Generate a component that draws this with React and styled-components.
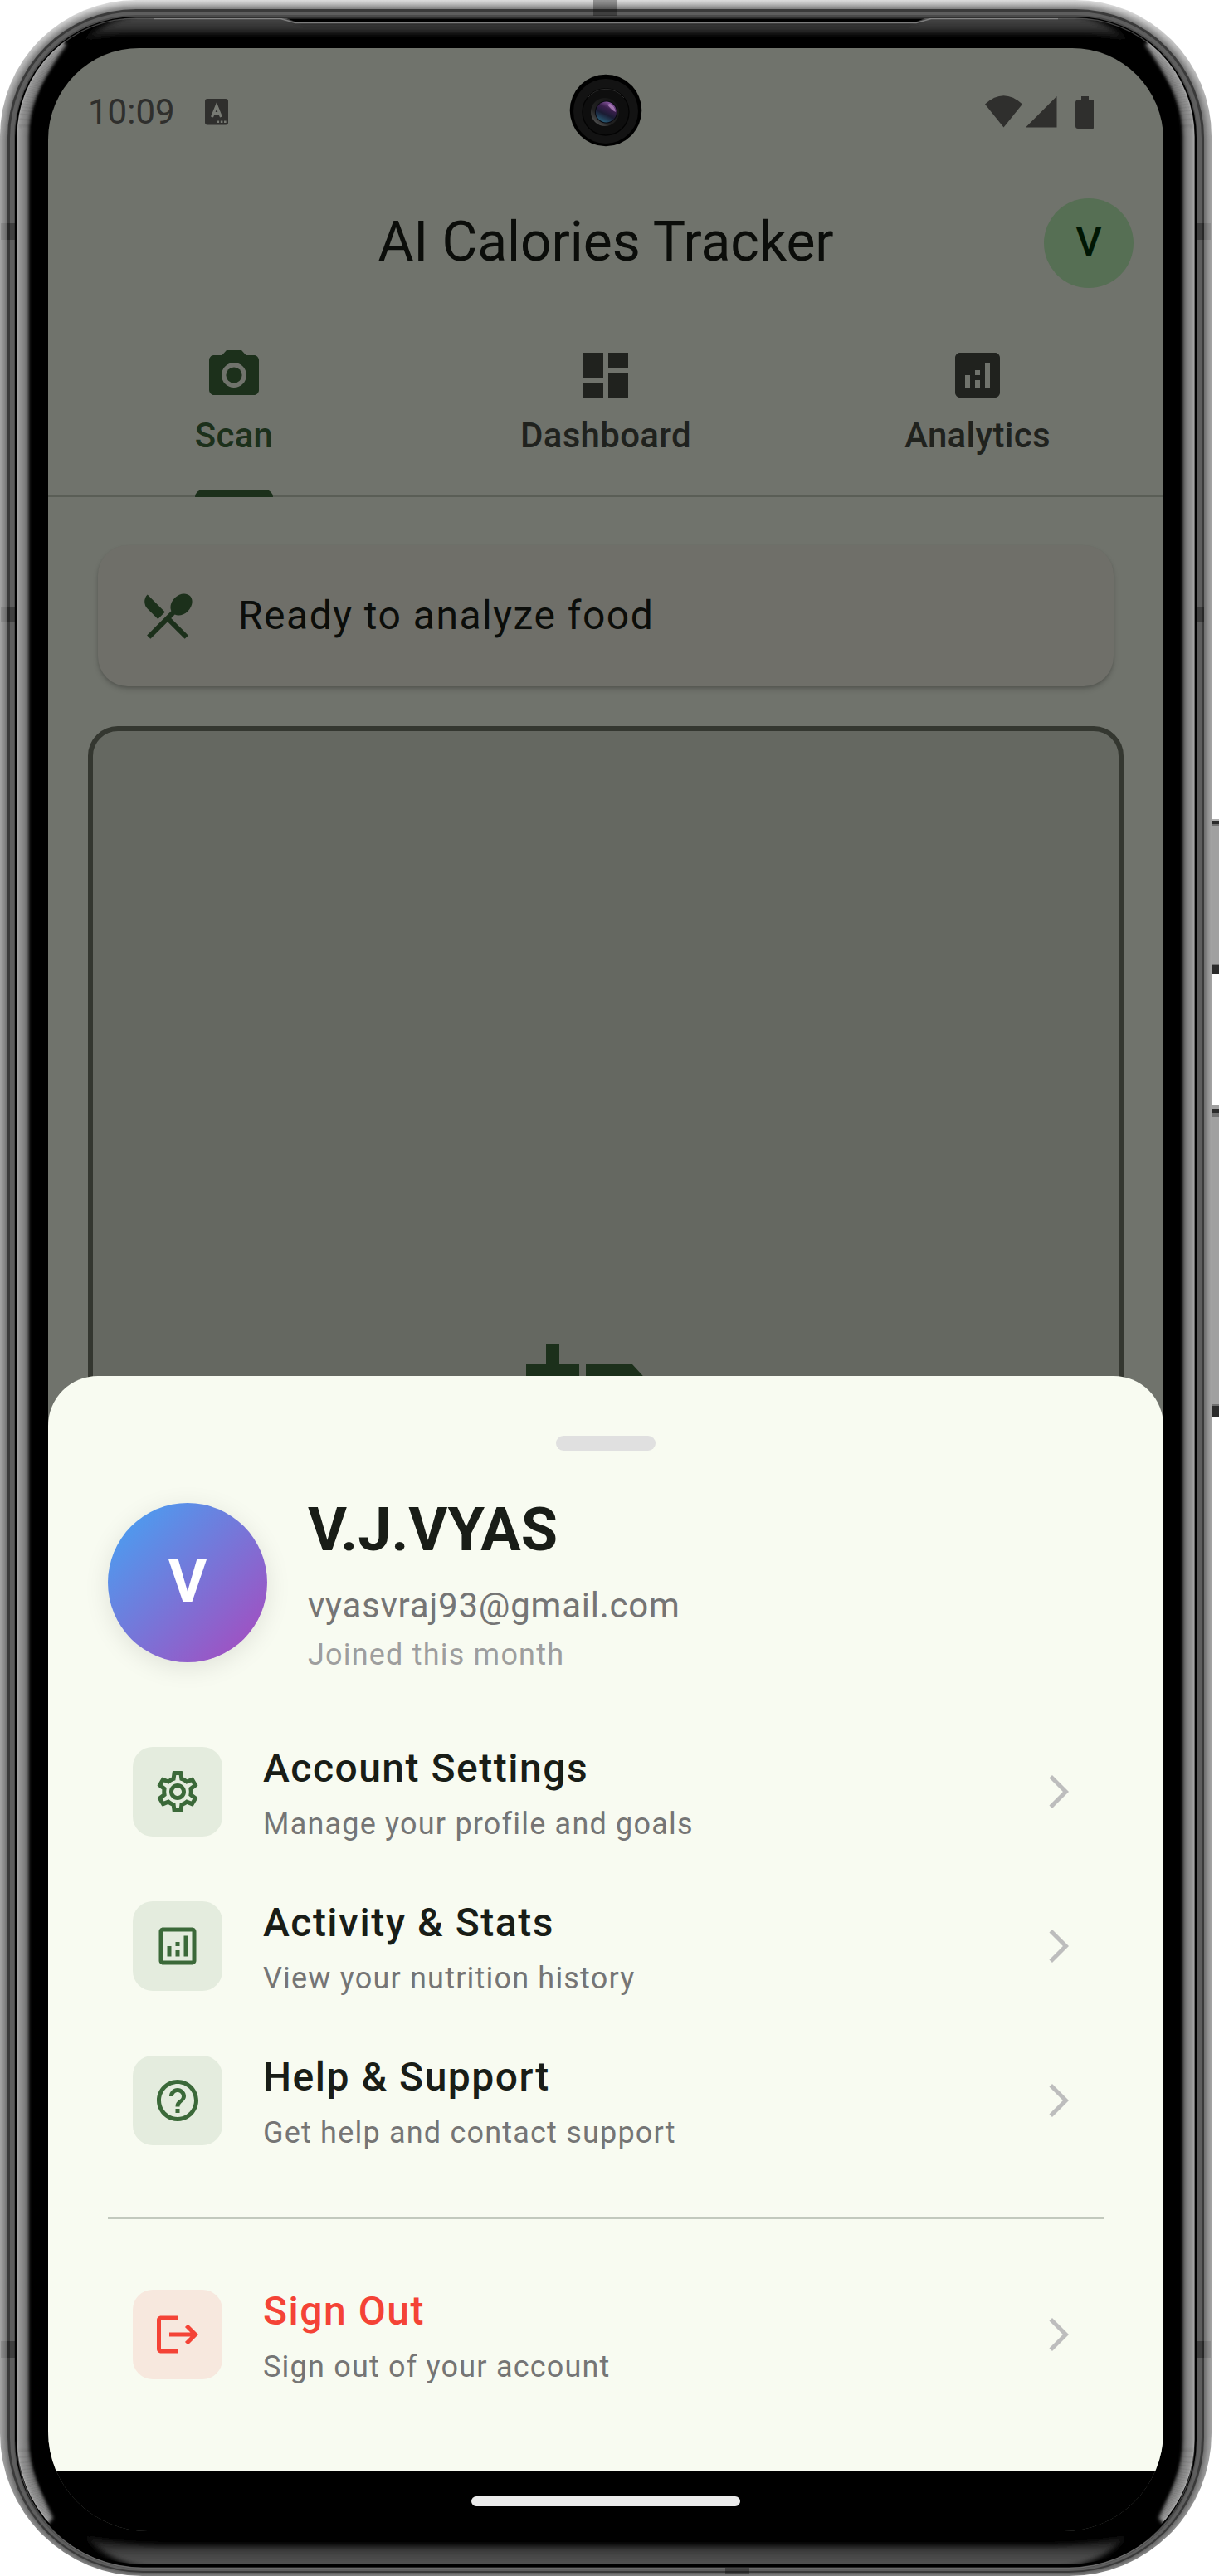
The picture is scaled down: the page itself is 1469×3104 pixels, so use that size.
import React from "react";
import styled, { createGlobalStyle } from "styled-components";
import {
  MdPhotoCamera,
  MdDashboard,
  MdAnalytics,
  MdRestaurantMenu,
  MdAddAPhoto,
  MdOutlineSettings,
  MdOutlineAnalytics,
  MdHelpOutline,
  MdLogout,
  MdArrowForwardIos,
} from "react-icons/md";

const color = {
  page: "#70736c",
  card: "#6f6f69",
  viewfinder: "#656861",
  outline: "#343730",
  hairline: "#5a5e56",
  ink: "#0b0d0a",
  muted: "#20221e",
  green: "#1c301b",
  sheet: "#f8fbf1",
  title: "#191d17",
  primary: "#3b6939",
  danger: "#f44336",
};

const GlobalStyle = createGlobalStyle`
  * { box-sizing: border-box; }
  body { margin: 0; background: #fff; font-family: Roboto, sans-serif; }
`;

const Phone = styled.main`
  position: relative;
  width: 1469px;
  height: 3104px;
  padding: 58px 67px 54px 58px;
  overflow: hidden;
`;

const ShellArt = styled.svg`
  position: absolute;
  inset: 0;
  display: block;
`;

const Screen = styled.div`
  position: relative;
  display: flex;
  flex-direction: column;
  height: 2992px;
  overflow: hidden;
  background: ${color.page};
  border-radius: 110px 110px 120px 120px;
`;

const StatusBar = styled.header`
  flex: none;
  display: flex;
  align-items: center;
  height: 153px;
  padding: 0 84px 0 48px;
  color: #2f2f2d;
`;

const Clock = styled.span`
  padding-top: 1px;
  font-size: 42px;
  line-height: 60px;
`;

const NoticeIcon = styled.svg`
  margin-left: 36px;
`;

const StatusIcons = styled.svg`
  margin-left: auto;
`;

const FrontCamera = styled.svg`
  position: absolute;
  left: 628px;
  top: 31px;
`;

const AppBar = styled.div`
  flex: none;
  display: grid;
  grid-template-columns: 1fr auto 1fr;
  align-items: center;
  height: 164px;
  padding: 0 36px;
`;

const AppTitle = styled.h1`
  grid-column: 2;
  margin: 0 0 2px;
  font-size: 66px;
  font-weight: 400;
  line-height: 84px;
  letter-spacing: -0.1px;
  color: ${color.ink};
`;

const SmallAvatar = styled.div`
  justify-self: end;
  display: flex;
  align-items: center;
  justify-content: center;
  width: 108px;
  height: 108px;
  padding-bottom: 2px;
  border-radius: 50%;
  background: #566f54;
  color: #001603;
  font-size: 48px;
  font-weight: 500;
  line-height: 60px;
`;

const Tabs = styled.nav`
  flex: none;
  display: grid;
  grid-template-columns: repeat(3, 1fr);
  height: 224px;
  box-shadow: inset 0 -3px 0 ${color.hairline};
`;

const Tab = styled.div`
  display: flex;
  flex-direction: column;
  align-items: center;
  padding-top: 41px;
  color: ${(p) => (p.$active ? color.green : color.muted)};
`;

const TabLabel = styled.span`
  display: flex;
  flex-direction: column;
  height: 111px;
  padding-top: 7px;
  font-size: 42px;
  font-weight: 500;
  line-height: 60px;
  letter-spacing: 0.3px;
`;

const Indicator = styled.i`
  height: 9px;
  margin-top: auto;
  border-radius: 9px 9px 0 0;
  background: ${color.green};
`;

const Content = styled.section`
  flex: none;
  display: flex;
  flex-direction: column;
  gap: 48px;
  padding: 58px 48px 0;
`;

const StatusCard = styled.div`
  display: flex;
  align-items: center;
  gap: 49px;
  height: 170px;
  margin: 0 12px;
  padding: 0 48px;
  border-radius: 36px;
  background: ${color.card};
  box-shadow: 0 4px 6px rgba(0, 0, 0, 0.16), 0 2px 3px rgba(0, 0, 0, 0.1);
  color: ${color.green};
`;

const CardText = styled.span`
  font-size: 48px;
  line-height: 72px;
  letter-spacing: 1.5px;
  color: ${color.ink};
`;

const Viewfinder = styled.div`
  display: flex;
  justify-content: center;
  align-items: flex-start;
  height: 1700px;
  padding-top: 731px;
  border: 6px solid ${color.outline};
  border-radius: 36px;
  background: ${color.viewfinder};
  color: ${color.green};
`;

const Sheet = styled.section`
  position: absolute;
  left: 0;
  right: 0;
  top: 1600px;
  bottom: 72px;
  display: flex;
  flex-direction: column;
  padding: 72px 72px 0;
  border-radius: 60px 60px 0 0;
  background: ${color.sheet};
`;

const Handle = styled.i`
  flex: none;
  align-self: center;
  width: 120px;
  height: 18px;
  border-radius: 9px;
  background: #e0e0e0;
`;

const Profile = styled.div`
  display: flex;
  gap: 49px;
  height: 192px;
  margin: 63px 0;
`;

const Avatar = styled.div`
  display: flex;
  align-items: center;
  justify-content: center;
  width: 192px;
  height: 192px;
  padding-bottom: 2px;
  border-radius: 50%;
  background: linear-gradient(135deg, #42a5f5, #ab47bc);
  box-shadow: 0 6px 30px rgba(0, 0, 0, 0.1);
  color: #fff;
  font-size: 72px;
  font-weight: 700;
  line-height: 84px;
`;

const ProfileText = styled.div`
  display: flex;
  flex-direction: column;
  margin-top: -9px;
`;

const Name = styled.h2`
  margin: 0 0 19px;
  font-size: 72px;
  font-weight: 700;
  line-height: 84px;
  color: ${color.title};
`;

const Email = styled.span`
  font-size: 42px;
  line-height: 60px;
  letter-spacing: 0.75px;
  color: #757575;
`;

const Joined = styled.span`
  margin-top: 4px;
  font-size: 36px;
  line-height: 50px;
  letter-spacing: 1.2px;
  color: #9e9e9e;
`;

const Row = styled.div`
  display: flex;
  align-items: center;
  height: 186px;
  padding: 0 30px;
`;

const Tile = styled.div`
  display: flex;
  align-items: center;
  justify-content: center;
  width: 108px;
  height: 108px;
  margin-right: 49px;
  border-radius: 24px;
  background: ${(p) => (p.$danger ? "#f7e8de" : "#e4ecde")};
  color: ${(p) => (p.$danger ? color.danger : color.primary)};
`;

const RowText = styled.div`
  flex: 1;
  display: flex;
  flex-direction: column;
  gap: 4px;
  padding-top: 2px;
`;

const RowTitle = styled.span`
  font-size: 48px;
  font-weight: 500;
  line-height: 72px;
  letter-spacing: 1.5px;
  color: ${(p) => (p.$danger ? color.danger : color.title)};
`;

const RowHint = styled.span`
  font-size: 36px;
  line-height: 54px;
  letter-spacing: 1.2px;
  color: #757575;
`;

const Chevron = styled(MdArrowForwardIos)`
  color: #bdbdbd;
`;

const Divider = styled.hr`
  width: 100%;
  height: 3px;
  margin: 47px 0 46px;
  border: 0;
  background: #c2c9bd;
`;

const NavBar = styled.footer`
  position: absolute;
  left: 0;
  right: 0;
  bottom: 0;
  display: flex;
  justify-content: center;
  height: 72px;
  padding-top: 30px;
  background: #000;
`;

const NavPill = styled.i`
  width: 324px;
  height: 12px;
  border-radius: 6px;
  background: #ebebeb;
`;

/* Rounded body outline with its own radii for the top and bottom corners. */
function body(i, t = i, b = i) {
  const l = i;
  const r = 1460 - i;
  const bot = 3104 - b;
  const rt = 164 - i;
  const rb = 172 - i;
  return (
    `M${l + rt} ${t}H${r - rt}A${rt} ${rt} 0 0 1 ${r} ${t + rt}` +
    `V${bot - rb}A${rb} ${rb} 0 0 1 ${r - rb} ${bot}` +
    `H${l + rb}A${rb} ${rb} 0 0 1 ${l} ${bot - rb}V${t + rt}A${rt} ${rt} 0 0 1 ${l + rt} ${t}Z`
  );
}

const rims = Array.from({ length: 10 }, (_, i) => i);

/* Brightness of the side reflection, from the metal inwards, one step per pixel. */
const glare = [168, 158, 152, 148, 144, 141, 138, 134, 130, 125, 118, 108, 94, 74, 50, 26, 8];

const sideGlare =
  "M0 200V40H62L80 54Q62 78 52 104Q40 134 39 190V2916Q40 2960 48 2990Q54 3014 64 3034L50 3050H0Z";

function Shell() {
  return (
    <ShellArt width="1469" height="3104" viewBox="0 0 1469 3104">
      <defs>
        <linearGradient id="rimTone" x1="0" x2="0" y1="0" y2="1">
          <stop offset="0" stopColor="#dcdcdc" />
          <stop offset="0.02" stopColor="#c4c4c4" />
          <stop offset="0.055" stopColor="#a4a4a4" />
          <stop offset="0.95" stopColor="#a4a4a4" />
          <stop offset="1" stopColor="#808080" />
        </linearGradient>
        <linearGradient id="glareT" x1="0" x2="0" y1="0" y2="1">
          <stop offset="0" stopColor="#505050" />
          <stop offset="0.5" stopColor="#353535" />
          <stop offset="1" stopColor="#000" />
        </linearGradient>
        <linearGradient id="glareB" x1="0" x2="0" y1="1" y2="0">
          <stop offset="0" stopColor="#5a5a5a" />
          <stop offset="0.45" stopColor="#444" />
          <stop offset="1" stopColor="#000" />
        </linearGradient>
        <filter id="soft" x="-50%" y="-5%" width="200%" height="110%">
          <feGaussianBlur stdDeviation="2" />
        </filter>
        <filter id="softEdge" x="-5%" y="-50%" width="110%" height="200%">
          <feGaussianBlur stdDeviation="3" />
        </filter>
        <mask id="sides" maskUnits="userSpaceOnUse" x="0" y="0" width="1469" height="3104">
          <g filter="url(#soft)">
            <path fill="#fff" d={sideGlare} />
            <path fill="#fff" d={sideGlare} transform="matrix(-1 0 0 1 1460 0)" />
          </g>
        </mask>
        <clipPath id="inner">
          <path d={body(21, 22, 14)} />
        </clipPath>
      </defs>

      {/* side buttons */}
      <path fill="#a2a2a2" d="M1459 969h1v214h-1zM1459 1324h1v392h-1z" />
      <path fill="#a0a0a0" d="M1460 987h9v187h-9z" />
      <path fill="#555" d="M1460 987h1v187h-1z" />
      <path fill="#b0b0b0" d="M1461 987h8v2h-8z" />
      <path fill="#2b2b2b" d="M1460 989h9v4h-9zM1461 1163h8v11h-8z" />
      <path fill="#707070" d="M1461 993h8v2h-8zM1461 1161h8v2h-8z" />
      <path fill="#a0a0a0" d="M1460 1331h9v376h-9z" />
      <path fill="#555" d="M1460 1331h1v376h-1z" />
      <path fill="#2b2b2b" d="M1460 1336h9v5h-9zM1461 1694h8v13h-8z" />
      <path fill="#707070" d="M1461 1341h8v5h-8zM1461 1692h8v2h-8z" />

      {/* metal rim */}
      <path fill="url(#rimTone)" d={body(0)} />
      {rims.map((i) => (
        <path
          key={i}
          fill="#555"
          fillOpacity={0.02 + i * 0.016}
          d={body(i * 0.95, i * 1.1, i * 0.4)}
        />
      ))}
      <path fill="#3a3a3a" d={body(9, 11, 4)} />
      <path fill="#5e5e5e" d={body(12, 14, 6)} />
      <path fill="#4a4a4a" d={body(17, 18, 8.5)} />
      <path fill="#000" d={body(18, 20, 10.5)} />

      {/* glass edge reflections */}
      <g mask="url(#sides)" fill="none" strokeWidth="1.5">
        {glare.map((v, k) => (
          <path key={k} stroke={`rgb(${v},${v},${v})`} d={body(21.3 + k, 22 + k, 14 + k)} />
        ))}
      </g>
      <g clipPath="url(#inner)">
        <g filter="url(#softEdge)">
          <path
            fill="url(#glareT)"
            d="M338 14L360 26H1100L1122 14H1275Q1330 20 1362 50Q1330 40 1290 41H170Q130 40 98 50Q130 20 185 14Z"
          />
          <path
            fill="url(#glareB)"
            d="M100 3054Q150 3068 200 3067H1260Q1310 3068 1360 3054Q1330 3090 1270 3096H190Q130 3090 100 3054Z"
          />
        </g>
        <path fill="#000" d="M340 20L357 26.500H1103L1120 20Z" />
        <path fill="none" stroke="#7d7d7d" strokeWidth="1.6" d="M185 22.500H338L356 27.500H1104L1122 22.500H1275" />
      </g>
      <path fill="none" stroke="#a0a0a0" strokeWidth="1.2" strokeOpacity="0.4" d={body(20.8, 21.8, 9.5)} />

      {/* antenna bands */}
      <path
        fill="#000"
        fillOpacity="0.32"
        d="M9 269h9v20H9zM9 731h9v19H9zM9 2821h9v20H9zM1442 269h9v20h-9zM1442 731h9v19h-9zM1442 2821h9v20h-9zM715 0h29v19h-29zM874 3094h29v7h-29z"
      />
      <path
        fill="#000"
        fillOpacity="0.1"
        d="M1 269h8v20H1zM1 731h8v19H1zM1 2821h8v20H1zM1451 269h8v20h-8zM1451 2821h8v20h-8z"
      />
    </ShellArt>
  );
}

function CameraHole() {
  return (
    <FrontCamera width="88" height="88" viewBox="0 0 88 88">
      <defs>
        <linearGradient id="lens" x1="0.75" y1="0.05" x2="0.3" y2="1">
          <stop offset="0" stopColor="#8d5aa4" />
          <stop offset="0.3" stopColor="#3a1f4c" />
          <stop offset="0.6" stopColor="#1a1c33" />
          <stop offset="1" stopColor="#29607a" />
        </linearGradient>
        <linearGradient id="ring" x1="0" y1="1" x2="0.8" y2="0.1">
          <stop offset="0" stopColor="#6a6a6a" />
          <stop offset="0.4" stopColor="#222" />
          <stop offset="1" stopColor="#151515" />
        </linearGradient>
      </defs>
      <circle cx="44" cy="44" r="43.3" fill="#000" />
      <circle cx="44" cy="45" r="39" fill="#131313" />
      <circle cx="44" cy="46" r="28" fill="#0e0e0e" stroke="#030303" strokeWidth="1.3" />
      <path d="M22 29A28 28 0 0 1 66 29" fill="none" stroke="#2a2a2a" strokeWidth="1" />
      <circle cx="43" cy="46" r="17" fill="url(#ring)" />
      <circle cx="44.5" cy="46" r="13.5" fill="#08080f" />
      <circle cx="44.5" cy="46" r="12.5" fill="url(#lens)" />
      <path d="M49 36Q55 39 56 46Q51 44 46 37Z" fill="#d9a8e2" fillOpacity="0.55" />
    </FrontCamera>
  );
}

const tabs = [
  { label: "Scan", Icon: MdPhotoCamera, active: true },
  { label: "Dashboard", Icon: MdDashboard },
  { label: "Analytics", Icon: MdAnalytics },
];

const menu = [
  { title: "Account Settings", hint: "Manage your profile and goals", Icon: MdOutlineSettings },
  { title: "Activity & Stats", hint: "View your nutrition history", Icon: MdOutlineAnalytics },
  { title: "Help & Support", hint: "Get help and contact support", Icon: MdHelpOutline },
];

function MenuRow({ title, hint, Icon, danger }) {
  return (
    <Row>
      <Tile $danger={danger}>
        <Icon size={60} />
      </Tile>
      <RowText>
        <RowTitle $danger={danger}>{title}</RowTitle>
        <RowHint>{hint}</RowHint>
      </RowText>
      <Chevron size={48} />
    </Row>
  );
}

export default function App() {
  return (
    <Phone>
      <GlobalStyle />
      <Shell />
      <Screen>
        <StatusBar>
          <Clock>10:09</Clock>
          <NoticeIcon width="28" height="32" viewBox="0 0 28 32">
            <rect width="28" height="31.5" rx="3" fill="currentColor" />
            <path d="M8.5 22L14 8.5L19.500 22M10.500 17.500H17.500" fill="none" stroke="#777a73" strokeWidth="3.200" />
            <path d="M14.500 26.500h2.600v2.600h-2.600zM18.800 26.500h2.600v2.600h-2.600zM23 26.500h2.600v2.600H23z" fill="#777a73" />
          </NoticeIcon>
          <StatusIcons width="132" height="42" viewBox="0 0 132 42" fill="currentColor">
            <path d="M1 11.500Q23.500 -9 46 11.500L23.500 39.500Z" />
            <path d="M87.500 2V39.500H50Z" />
            <path d="M117 2h9v4.500h4q3 0 3 3V38q0 3-3 3h-17q-3 0-3-3V9.500q0-3 3-3h4Z" />
          </StatusIcons>
        </StatusBar>

        <AppBar>
          <AppTitle>AI Calories Tracker</AppTitle>
          <SmallAvatar>V</SmallAvatar>
        </AppBar>

        <Tabs>
          {tabs.map(({ label, Icon, active }) => (
            <Tab key={label} $active={active}>
              <Icon size={72} />
              <TabLabel>
                {label}
                {active && <Indicator />}
              </TabLabel>
            </Tab>
          ))}
        </Tabs>

        <Content>
          <StatusCard>
            <MdRestaurantMenu size={72} />
            <CardText>Ready to analyze food</CardText>
          </StatusCard>
          <Viewfinder>
            <MdAddAPhoto size={192} />
          </Viewfinder>
        </Content>

        <Sheet>
          <Handle />
          <Profile>
            <Avatar>V</Avatar>
            <ProfileText>
              <Name>V.J.VYAS</Name>
              <Email>vyasvraj93@gmail.com</Email>
              <Joined>Joined this month</Joined>
            </ProfileText>
          </Profile>
          {menu.map((item) => (
            <MenuRow key={item.title} {...item} />
          ))}
          <Divider />
          <MenuRow title="Sign Out" hint="Sign out of your account" Icon={MdLogout} danger />
        </Sheet>

        <NavBar>
          <NavPill />
        </NavBar>
        <CameraHole />
      </Screen>
    </Phone>
  );
}
